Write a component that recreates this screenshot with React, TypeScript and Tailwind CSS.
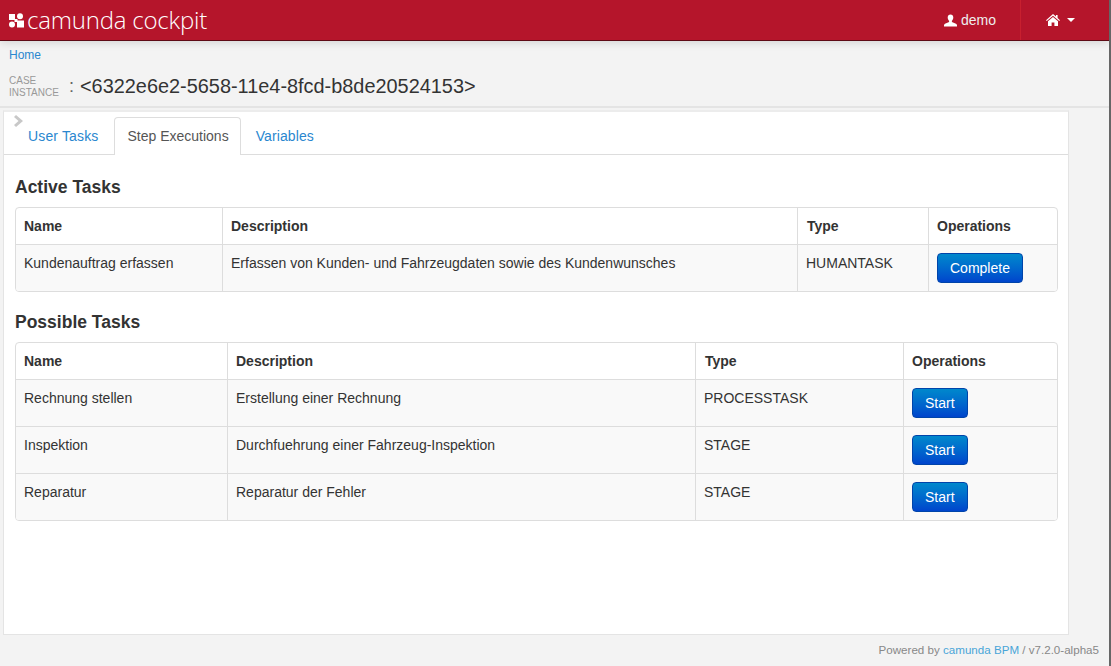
import React from "react";

interface Row {
  name: string;
  description: string;
  type: string;
}

const activeTasks: Row[] = [
  {
    name: "Kundenauftrag erfassen",
    description: "Erfassen von Kunden- und Fahrzeugdaten sowie des Kundenwunsches",
    type: "HUMANTASK",
  },
];

const possibleTasks: Row[] = [
  { name: "Rechnung stellen", description: "Erstellung einer Rechnung", type: "PROCESSTASK" },
  { name: "Inspektion", description: "Durchfuehrung einer Fahrzeug-Inspektion", type: "STAGE" },
  { name: "Reparatur", description: "Reparatur der Fehler", type: "STAGE" },
];

function Logo() {
  return (
    <svg width="15" height="15" viewBox="0 0 15 15" className="shrink-0">
      <rect x="0" y="1" width="6" height="6" fill="#fff" />
      <circle cx="11" cy="3.2" r="3" fill="#fff" />
      <circle cx="3" cy="11.5" r="3" fill="#fff" />
      <rect x="8" y="7.5" width="7" height="7" fill="#fff" />
      <rect x="5.5" y="6" width="3" height="3" fill="#fff" />
    </svg>
  );
}

function UserIcon() {
  return (
    <svg width="13" height="13" viewBox="0 0 13 13" fill="#fff">
      <path d="M6.5 0.5c-1.7 0-2.8 1.2-2.8 3 0 1.3.6 2.6 1.4 3.2v1.2L1 9.8c-.7.4-1 .9-1 1.5v1.2h13v-1.2c0-.6-.3-1.1-1-1.5L7.9 7.9V6.7c.8-.6 1.4-1.9 1.4-3.2 0-1.8-1.1-3-2.8-3z" />
    </svg>
  );
}

function HomeIcon() {
  return (
    <svg width="14" height="12" viewBox="0 0 14 12" fill="#fff">
      <path d="M7 0 0 6.2l.8.8L7 1.7l6.2 5.3.8-.8-2.4-2.2V1H10v1.6L7 0z" />
      <path d="M7 2.9 2 7.2V12h3.6V8.5h2.8V12H12V7.2L7 2.9z" />
    </svg>
  );
}

function TaskTable({
  rows,
  action,
  columns,
}: {
  rows: Row[];
  action: string;
  columns: string;
}) {
  return (
    <div className="border border-[#dddddd] rounded-[4px] overflow-hidden bg-white">
      <div className={`grid ${columns} h-[36px] font-bold text-[#333333]`}>
        <div className="px-2 pt-[8px]">Name</div>
        <div className="px-2 pt-[8px] border-l border-[#dddddd]">Description</div>
        <div className="pl-[9px] pr-2 pt-[8px] border-l border-[#dddddd]">Type</div>
        <div className="px-2 pt-[8px] border-l border-[#dddddd]">Operations</div>
      </div>
      {rows.map((row) => (
        <div
          key={row.name}
          className={`grid ${columns} h-[47px] bg-[#f9f9f9] border-t border-[#dddddd] text-[#333333]`}
        >
          <div className="px-2 pt-[8px]">{row.name}</div>
          <div className="px-2 pt-[8px] border-l border-[#dddddd]">{row.description}</div>
          <div className="px-2 pt-[8px] border-l border-[#dddddd]">{row.type}</div>
          <div className="px-2 pt-[8px] border-l border-[#dddddd]">
            <button className="h-[30px] px-[12px] rounded-[4px] border border-[#0044aa] bg-gradient-to-b from-[#0088cc] to-[#0044cc] text-white text-[14px] leading-[20px]">
              {action}
            </button>
          </div>
        </div>
      ))}
    </div>
  );
}

export default function App() {
  return (
    <div className="w-[1111px] h-[666px] overflow-hidden flex flex-col bg-[#f3f3f3] border-r-2 border-[#666666] text-[14px] leading-[20px] font-['Liberation_Sans',Arial,sans-serif]">
      {/* Navbar */}
      <div className="h-[41px] shrink-0 flex items-stretch justify-between bg-[#b5152b] border-b border-[#5e0a15] shadow-[0_2px_8px_rgba(0,0,0,0.12)]">
        <div className="flex items-center pl-[9px] gap-[3px]">
          <Logo />
          <span className="text-white text-[24px] leading-[40px] font-light font-['Open_Sans',sans-serif] tracking-[-0.2px]">
            camunda cockpit
          </span>
        </div>
        <div className="flex items-stretch">
          <div className="flex items-center gap-[4px] w-[76px] text-[#eeeeee]">
            <UserIcon />
            <span>demo</span>
          </div>
          <div className="flex items-center w-[89px] pl-[25px] gap-[7px] border-l border-[#c8202f]">
            <HomeIcon />
            <span className="w-0 h-0 border-x-[4px] border-x-transparent border-t-[4px] border-t-white" />
          </div>
        </div>
      </div>

      {/* Page header */}
      <div className="h-[67px] shrink-0 px-[9px] border-b-2 border-[#e4e4e4]">
        <div className="text-[12px] leading-[18px] text-[#2a87cf] pt-[5px]">Home</div>
        <div className="flex items-center mt-[9px]">
          <div className="text-[10px] leading-[12px] text-[#999999] uppercase w-[60px] pt-[2px]">
            Case
            <br />
            Instance
          </div>
          <span className="text-[18px] leading-[24px] text-[#666666] w-[11px]">:</span>
          <span className="text-[19.9px] leading-[24px] text-[#333333]">
            &lt;6322e6e2-5658-11e4-8fcd-b8de20524153&gt;
          </span>
        </div>
      </div>

      {/* Main panel */}
      <div className="flex-1 min-h-0 pt-[2px] pl-[3px]">
        <div className="h-[525px] w-[1066px] bg-white border-t-2 border-r border-b border-l border-t-[#ececec] border-[#e4e4e4] relative">
          <svg
            width="10"
            height="12"
            viewBox="0 0 10 12"
            fill="#c8c8c8"
            className="absolute left-[10px] top-[3px]"
          >
            <path d="M2 0 9 6 2 12 0 10 4.5 6 0 2z" />
          </svg>
          <div className="flex h-[43px] items-end border-b border-[#dddddd] pl-[11px]">
            <div className="pl-[13px] pr-[16px] h-[37px] pt-[9px] text-[#2a87cf] tracking-[0.15px]">
              User Tasks
            </div>
            <div className="pl-[12px] pr-[11px] h-[38px] pt-[8px] text-[#555555] bg-white border border-b-0 border-[#dddddd] rounded-t-[4px] -mb-[1px]">
              Step Executions
            </div>
            <div className="pl-[15px] pr-[14px] h-[37px] pt-[9px] text-[#2a87cf] tracking-[0.1px]">
              Variables
            </div>
          </div>
          <div className="pl-[11px] pr-[10px]">
            <h3 className="text-[17.5px] leading-[20px] font-bold text-[#333333] mt-[22px] mb-[10px]">
              Active Tasks
            </h3>
            <TaskTable
              rows={activeTasks}
              action="Complete"
              columns="grid-cols-[206px_575px_131px_1fr]"
            />
            <h3 className="text-[17.5px] leading-[20px] font-bold text-[#333333] mt-[20px] mb-[10px]">
              Possible Tasks
            </h3>
            <TaskTable
              rows={possibleTasks}
              action="Start"
              columns="grid-cols-[211px_468px_208px_1fr]"
            />
          </div>
        </div>
        <div className="text-right text-[11.6px] leading-[18px] text-[#888888] pr-[10px] pt-[6px]">
          Powered by <span className="text-[#49a5d8]">camunda BPM</span> / v7.2.0-alpha5
        </div>
      </div>
    </div>
  );
}
